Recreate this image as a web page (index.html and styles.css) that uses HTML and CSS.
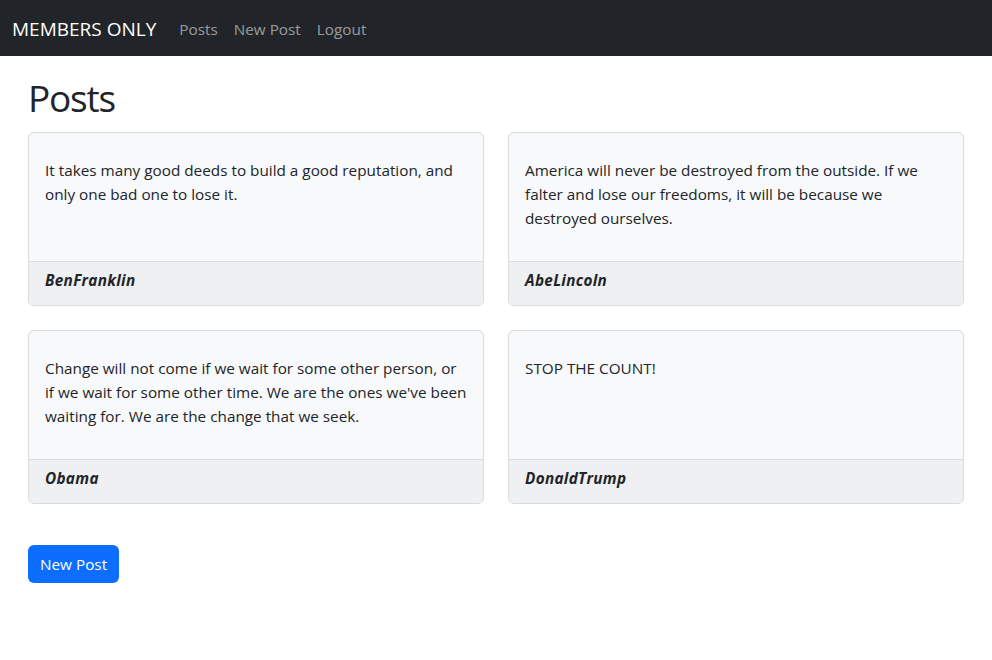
FILE: index.html
```html
<!DOCTYPE html>
<html lang="en">
<head>
<meta charset="utf-8">
<title>Members Only</title>
<link rel="stylesheet" href="styles.css">
</head>
<body>
<nav class="navbar">
  <a class="brand" href="#">MEMBERS ONLY</a>
  <ul class="nav-links">
    <li><a href="#">Posts</a></li>
    <li><a href="#">New Post</a></li>
    <li><a href="#">Logout</a></li>
  </ul>
</nav>
<main class="container">
  <h1 class="page-title">Posts</h1>
  <div class="grid">
    <div class="card">
      <div class="card-body"><p>It takes many good deeds to build a good reputation, and only one bad one to lose it.</p></div>
      <div class="card-footer"><strong><em>BenFranklin</em></strong></div>
    </div>
    <div class="card">
      <div class="card-body"><p>America will never be destroyed from the outside. If we falter and lose our freedoms, it will be because we destroyed ourselves.</p></div>
      <div class="card-footer"><strong><em>AbeLincoln</em></strong></div>
    </div>
    <div class="card">
      <div class="card-body"><p>Change will not come if we wait for some other person, or if we wait for some other time. We are the ones we've been waiting for. We are the change that we seek.</p></div>
      <div class="card-footer"><strong><em>Obama</em></strong></div>
    </div>
    <div class="card">
      <div class="card-body"><p>STOP THE COUNT!</p></div>
      <div class="card-footer"><strong><em>DonaldTrump</em></strong></div>
    </div>
  </div>
  <a class="btn-primary" href="#">New Post</a>
</main>
</body>
</html>
```
FILE: styles.css
```css
* { box-sizing: border-box; }
html, body { margin: 0; padding: 0; }
body {
  font-family: "Open Sans", "Noto Sans", sans-serif;
  font-size: 15.3px;
  line-height: 24px;
  color: #212529;
  background: #fff;
}
a { text-decoration: none; }

.navbar {
  background: #212529;
  height: 56px;
  display: flex;
  align-items: center;
  padding: 2px 12px 0;
}
.brand {
  color: #fff;
  font-size: 19px;
  line-height: 30px;
  margin-right: 15px;
}
.nav-links {
  list-style: none;
  display: flex;
  margin: 0;
  padding: 0;
}
.nav-links a {
  display: block;
  padding: 8px;
  color: rgba(255,255,255,0.55);
  font-size: 15.3px;
}

.container {
  width: 960px;
  margin: 0 auto;
  padding: 18px 12px 0;
}
.page-title {
  font-size: 37px;
  letter-spacing: -1.2px;
  font-weight: 400;
  line-height: 48px;
  margin: 0 0 10px;
}
.grid {
  display: grid;
  grid-template-columns: 1fr 1fr;
  column-gap: 24px;
  row-gap: 24px;
}
.card {
  background: #f8f9fa;
  border: 1px solid #d9dadb;
  border-radius: 6px;
  overflow: hidden;
  display: flex;
  flex-direction: column;
}
.card-body {
  height: 128px;
  padding: 25px 16px 16px;
}
.card-body p { margin: 0; }
.card-footer {
  background: #eff0f1;
  border-top: 1px solid #d9dadb;
  padding: 6px 16px 13px;
  line-height: 24px;
  letter-spacing: 0.3px;
}
.btn-primary {
  display: inline-block;
  margin-top: 41px;
  background: #0d6efd;
  color: #fff;
  border-radius: 6px;
  padding: 7px 12px;
  line-height: 24px;
  font-size: 15.3px;
}
```
